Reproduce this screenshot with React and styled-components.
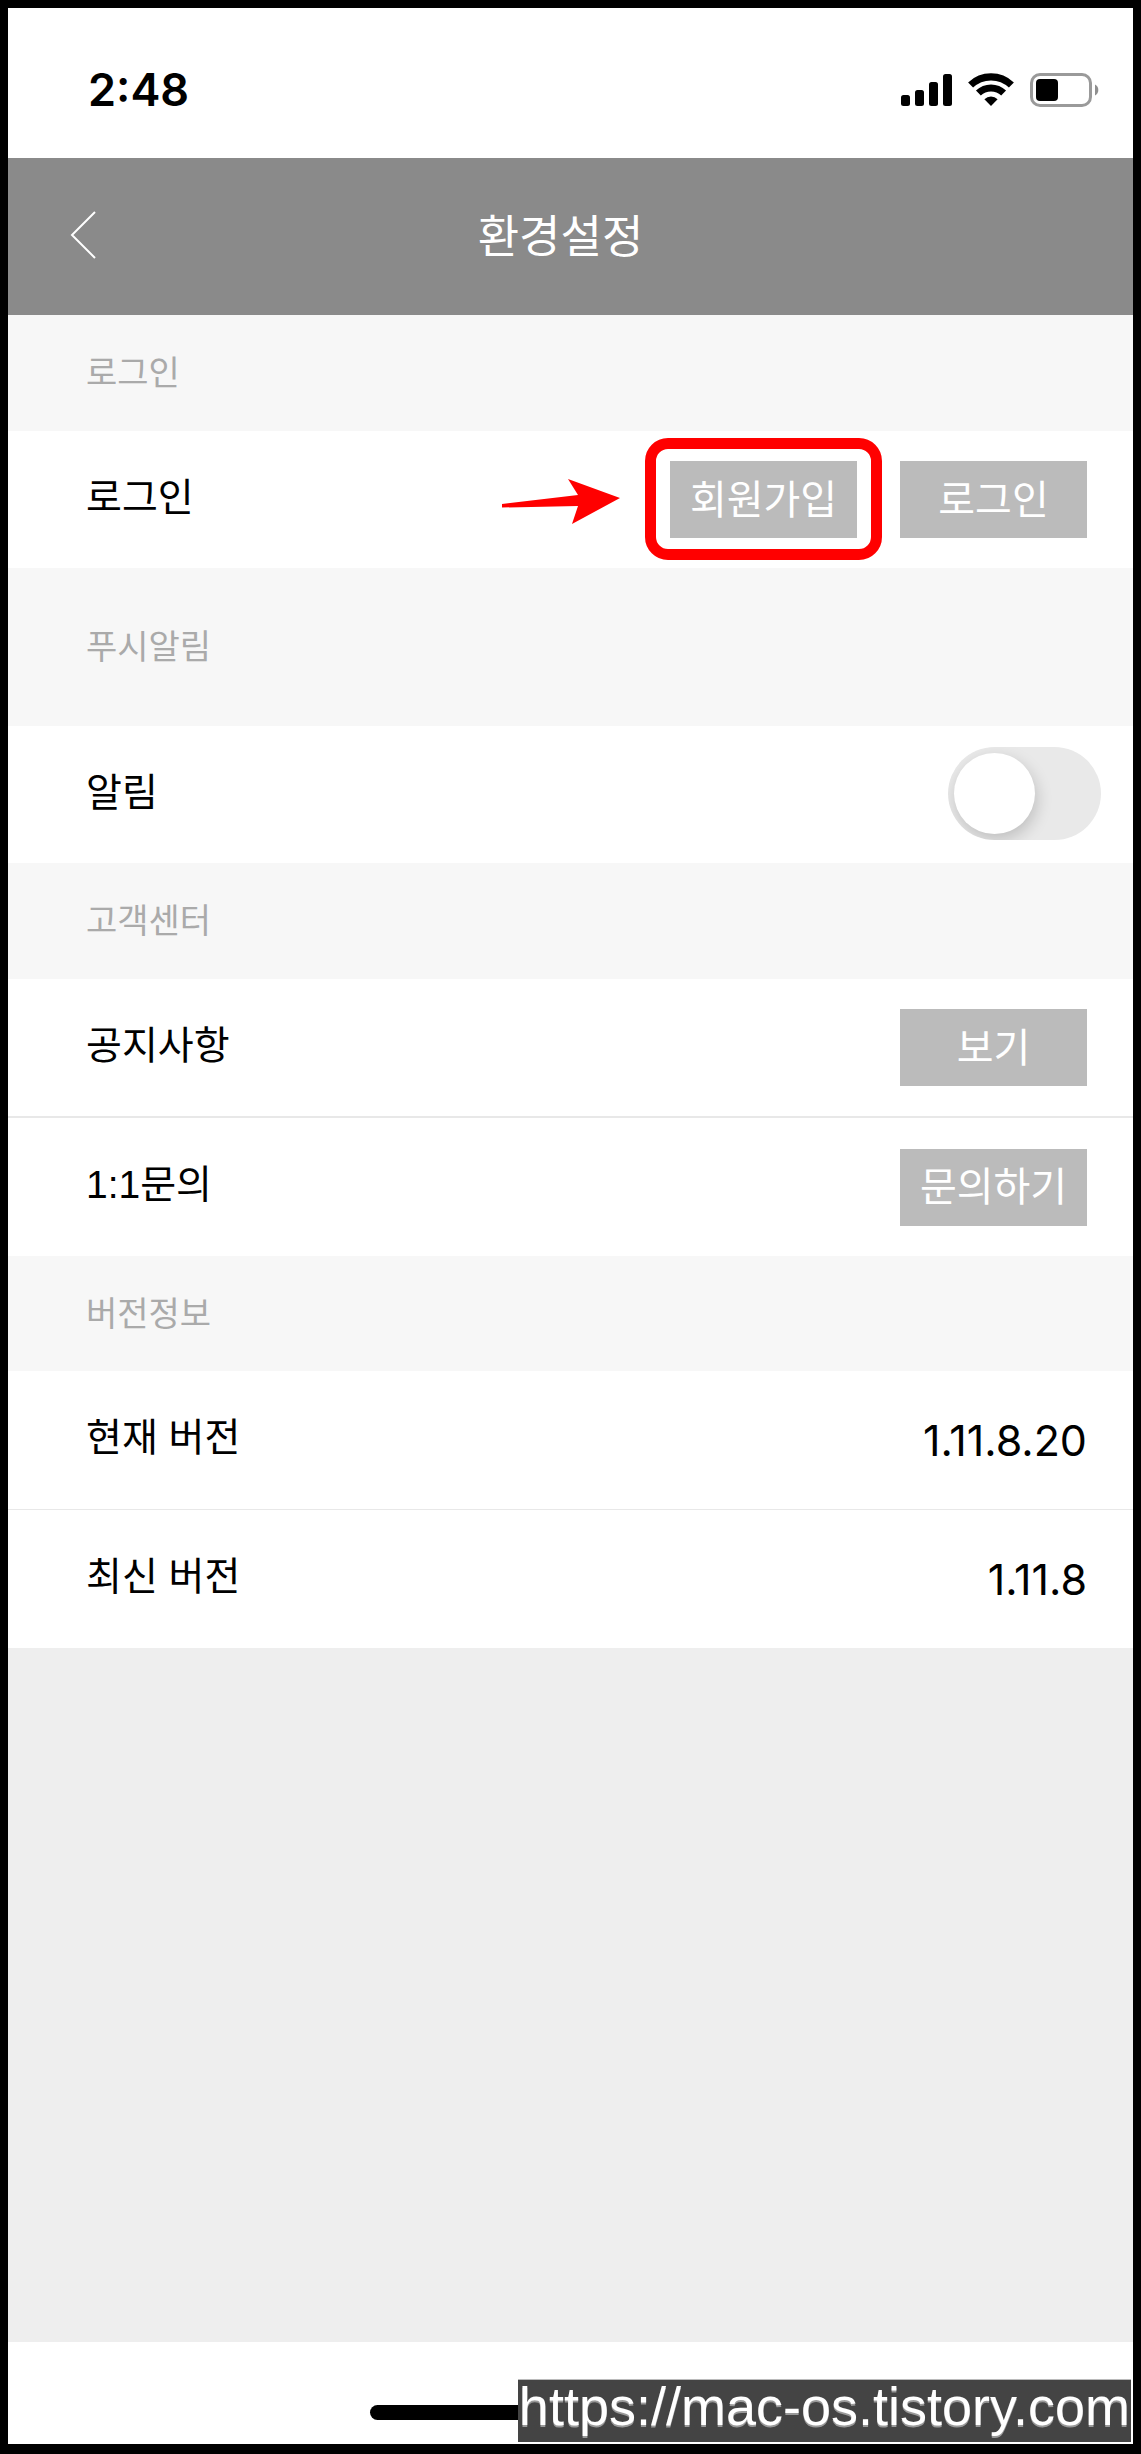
import React, { useState } from "react";
import styled, { createGlobalStyle } from "styled-components";

const GlobalStyle = createGlobalStyle`
  *, *::before, *::after { box-sizing: border-box; }
  body {
    margin: 0;
    background: #000;
    font-family: Inter, "Noto Sans CJK KR", sans-serif;
    color: #000;
  }
  button, input { font: inherit; }
`;

const Frame = styled.div`
  position: relative;
  display: flex;
  flex-direction: column;
  min-height: 100vh;
  border: solid #000;
  border-width: 8px 8px 10px;
  background: #eee;
`;

const StatusBar = styled.div`
  display: flex;
  align-items: center;
  justify-content: space-between;
  height: 150px;
  padding: 14px 34px 0 80px;
  background: #fff;
`;

const Time = styled.time`
  font-size: 45px;
  font-weight: 600;
  line-height: 54px;
`;

const StatusIcons = styled.div`
  display: flex;
  align-items: center;
  gap: 16px;
`;

const Header = styled.header`
  display: grid;
  grid-template-columns: 108px 1fr 128px;
  align-items: center;
  height: 157px;
  background: #8a8a8a;
  color: #fff;
`;

const BackButton = styled.button`
  display: flex;
  justify-content: flex-end;
  padding: 20px 20px 24px;
  border: 0;
  background: none;
  color: inherit;
`;

const Title = styled.h1`
  margin: 0;
  font-size: 45px;
  font-weight: 400;
  line-height: 60px;
  text-align: center;
`;

const SectionTitle = styled.h2`
  display: flex;
  align-items: center;
  height: ${(p) => p.$height || 116}px;
  margin: 0;
  padding: 0 78px;
  background: #f7f7f7;
  color: #aaa;
  font-size: 34px;
  font-weight: 400;
  line-height: 50px;
`;

const Row = styled.div`
  display: flex;
  align-items: center;
  justify-content: space-between;
  height: ${(p) => p.$height || 137}px;
  padding: 0 ${(p) => p.$end || 46}px 0 78px;
  border-top: ${(p) => p.$line || 0}px solid #e8e8e8;
  background: #fff;
`;

const RowLabel = styled.label`
  padding-bottom: 4px;
  font-family: "Liberation Sans", "Noto Sans CJK KR", sans-serif;
  font-size: 39px;
  font-kerning: none;
  line-height: 58px;
`;

const Actions = styled.div`
  display: flex;
  gap: 43px;
`;

const ActionButton = styled.button`
  width: 187px;
  height: 77px;
  padding: 0;
  border: 0;
  background: #bbb;
  color: #fff;
  font-size: 40px;
  line-height: 58px;
`;

const Callout = styled.div`
  position: relative;
  display: flex;

  &::after {
    content: "";
    position: absolute;
    inset: -23px -25px -22px;
    border: 11px solid #f00;
    border-radius: 23px;
    pointer-events: none;
  }
`;

const Arrow = styled.svg`
  position: absolute;
  right: 237px;
  top: 18px;
`;

const Toggle = styled.input`
  appearance: none;
  display: flex;
  align-items: center;
  width: 153px;
  height: 93px;
  margin: 0 0 2px;
  padding: 6px;
  border-radius: 47px;
  background: #e9e9e9;
  overflow: hidden;

  &::before {
    content: "";
    width: 81px;
    height: 81px;
    border-radius: 50%;
    background: #fff;
    box-shadow: 2px 6px 16px rgba(0, 0, 0, 0.18);
  }

  &:checked {
    justify-content: flex-end;
    background: #4cd964;
  }
`;

const Version = styled.span`
  font-size: 43px;
  line-height: 58px;
`;

const HomeBar = styled.footer`
  display: flex;
  justify-content: center;
  height: 102px;
  margin-top: auto;
  padding-top: 63px;
  background: #fff;
`;

const HomeIndicator = styled.div`
  width: 401px;
  height: 15px;
  border-radius: 8px;
  background: #000;
`;

const Watermark = styled.a`
  position: absolute;
  right: 2px;
  bottom: 2px;
  padding: 0 1px 10px;
  border-top: 1px solid #bbb;
  background: #444;
  color: #fff;
  font-family: "Liberation Sans", Arial, sans-serif;
  font-size: 54px;
  line-height: 52px;
  text-decoration: none;
  text-shadow: 0 2px 0 #999;
`;

const SignalIcon = () => (
  <svg width="51" height="34" viewBox="0 0 51 34" aria-hidden="true">
    <rect x="0" y="22" width="9" height="11" rx="2.5" />
    <rect x="14" y="17" width="9" height="16" rx="2.5" />
    <rect x="28" y="9" width="9" height="24" rx="2.5" />
    <rect x="42" y="1" width="9" height="32" rx="2.5" />
  </svg>
);

const WifiIcon = () => (
  <svg width="46" height="34" viewBox="0 0 46 34" fill="none" stroke="#000" aria-hidden="true">
    <path d="M2.6 12a29.5 29.5 0 0 1 40.8 0" strokeWidth="7.2" />
    <path d="M10.4 20a18.2 18.2 0 0 1 25.2 0" strokeWidth="7" />
    <path d="M23 33l-6.6-6.8a9.6 9.6 0 0 1 13.2 0z" fill="#000" stroke="none" />
  </svg>
);

const BatteryIcon = () => (
  <svg width="69" height="34" viewBox="0 0 69 34" aria-hidden="true">
    <rect x="1.5" y="1.5" width="59" height="31" rx="8.5" fill="none" stroke="#9a9a9a" strokeWidth="3" />
    <rect x="6" y="6" width="22" height="22" rx="4" />
    <path d="M65 11.5a6.2 6.2 0 0 1 0 11z" fill="#8f8f8f" />
  </svg>
);

export default function App() {
  const [push, setPush] = useState(false);

  return (
    <>
      <GlobalStyle />
      <Frame>
        <StatusBar>
          <Time>2:48</Time>
          <StatusIcons>
            <SignalIcon />
            <WifiIcon />
            <BatteryIcon />
          </StatusIcons>
        </StatusBar>

        <Header>
          <BackButton type="button" aria-label="뒤로">
            <svg width="26" height="48" viewBox="0 0 26 48" fill="none" stroke="currentColor" strokeWidth="2">
              <path d="M25 1L2 24l23 23" />
            </svg>
          </BackButton>
          <Title>환경설정</Title>
        </Header>

        <main>
          <SectionTitle>로그인</SectionTitle>
          <Row>
            <RowLabel as="span">로그인</RowLabel>
            <Actions>
              <Callout>
                <Arrow width="118" height="46" viewBox="0 0 118 46" fill="#f00" aria-hidden="true">
                  <path d="M0 25L76 16L66 0L118 19L70 45L76 27L0 28.5z" />
                </Arrow>
                <ActionButton type="button">회원가입</ActionButton>
              </Callout>
              <ActionButton type="button">로그인</ActionButton>
            </Actions>
          </Row>

          <SectionTitle $height={158}>푸시알림</SectionTitle>
          <Row $end={32}>
            <RowLabel htmlFor="push">알림</RowLabel>
            <Toggle id="push" type="checkbox" checked={push} onChange={(e) => setPush(e.target.checked)} />
          </Row>

          <SectionTitle>고객센터</SectionTitle>
          <Row>
            <RowLabel as="span">공지사항</RowLabel>
            <ActionButton type="button">보기</ActionButton>
          </Row>
          <Row $height={140} $line={2}>
            <RowLabel as="span">1:1문의</RowLabel>
            <ActionButton type="button">문의하기</ActionButton>
          </Row>

          <SectionTitle $height={115}>버전정보</SectionTitle>
          <Row $height={138}>
            <RowLabel as="span">현재 버전</RowLabel>
            <Version>1.11.8.20</Version>
          </Row>
          <Row $height={139} $line={1}>
            <RowLabel as="span">최신 버전</RowLabel>
            <Version>1.11.8</Version>
          </Row>
        </main>

        <HomeBar>
          <HomeIndicator />
        </HomeBar>
        <Watermark href="https://mac-os.tistory.com">https://mac-os.tistory.com</Watermark>
      </Frame>
    </>
  );
}
